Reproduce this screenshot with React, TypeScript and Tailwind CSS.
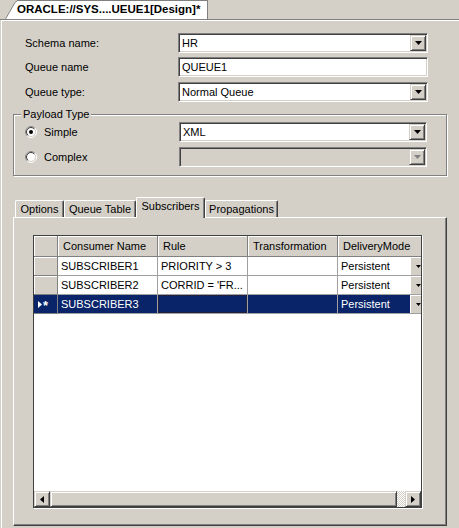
import React from "react";

const raised =
  "border border-t-[#d4d0c8] border-l-[#d4d0c8] border-b-[#404040] border-r-[#404040] shadow-[inset_1px_1px_0_#fff,inset_-1px_-1px_0_#808080] bg-[#d4d0c8]";
const sunken =
  "border border-t-[#808080] border-l-[#808080] border-b-white border-r-white shadow-[inset_1px_1px_0_#404040,inset_-1px_-1px_0_#d4d0c8]";

function DownArrow({ color = "#000" }: { color?: string }) {
  return (
    <svg width="7" height="4" viewBox="0 0 7 4">
      <polygon points="0,0 7,0 3.5,4" fill={color} />
    </svg>
  );
}

function Combo({ value, disabled, width = 250 }: { value?: string; disabled?: boolean; width?: number }) {
  return (
    <div
      className={`${sunken} h-[20px] p-[1px] flex items-center ${disabled ? "bg-[#d4d0c8]" : "bg-white"} ${
        width === 250 ? "w-[250px]" : "w-[248px]"
      }`}
    >
      <span className="pl-[2px] flex-1 leading-none">{value}</span>
      <div className={`${raised} w-[16px] h-[16px] flex items-center justify-center`}>
        <DownArrow color={disabled ? "#808080" : "#000"} />
      </div>
    </div>
  );
}

function Radio({ checked }: { checked?: boolean }) {
  return (
    <svg width="12" height="12" viewBox="0 0 12 12" className="shrink-0">
      <circle cx="6" cy="6" r="5.5" fill="none" stroke="#ffffff" />
      <path d="M 2.1 9.9 A 5.5 5.5 0 0 1 9.9 2.1" fill="none" stroke="#808080" />
      <circle cx="6" cy="6" r="4.5" fill="#fff" stroke="#d4d0c8" />
      <path d="M 2.8 9.2 A 4.5 4.5 0 0 1 9.2 2.8" fill="none" stroke="#404040" />
      {checked && <circle cx="6" cy="6" r="2" fill="#000" />}
    </svg>
  );
}

type Row = { name: string; rule: string; trans: string; mode: string; selected?: boolean };

const rows: Row[] = [
  { name: "SUBSCRIBER1", rule: "PRIORITY > 3", trans: "", mode: "Persistent" },
  { name: "SUBSCRIBER2", rule: "CORRID = 'FR...", trans: "", mode: "Persistent" },
  { name: "SUBSCRIBER3", rule: "", trans: "", mode: "Persistent", selected: true },
];

function Tab({ label, selected, w }: { label: string; selected?: boolean; w: string }) {
  return (
    <div
      className={`${w} shrink-0 flex items-center justify-center bg-[#d4d0c8] border-t border-l border-t-white border-l-white border-r border-r-[#404040] shadow-[inset_-1px_0_0_#808080] rounded-tl-[2px] rounded-tr-[2px] ${
        selected ? "h-[21px] -mb-px relative z-10 pb-[3px]" : "h-[17px]"
      }`}
    >
      {label}
    </div>
  );
}

export default function App() {
  return (
    <div className="w-[459px] h-[528px] bg-[#d4d0c8] overflow-hidden font-['Liberation_Sans',Arial,sans-serif] text-[11px] text-black flex flex-col">
      {/* document tab strip */}
      <div className="h-[20px] shrink-0 flex items-end border-b border-[#808080] pl-[5px]">
        <svg width="12" height="19" viewBox="0 0 12 19" className="shrink-0">
          <polygon points="0,19 10,2.5 12,1 12,19" fill="#fff" />
          <polyline points="0.5,19 10,2.5 12,1" fill="none" stroke="#808080" />
        </svg>
        <div className="h-[19px] bg-white border-t border-r border-[#808080] flex items-center pr-[7px] font-bold text-[11.5px] leading-none">
          ORACLE://SYS....UEUE1[Design]*
        </div>
      </div>

      <div className="flex-1 flex flex-col border-l border-t border-white ml-[1px]">
        {/* form fields */}
        <div className="pt-[12px] flex flex-col">
          <div className="flex items-center h-[20px]">
            <span className="w-[176px] pl-[23px]">Schema name:</span>
            <Combo value="HR" />
          </div>
          <div className="flex items-center h-[20px] mt-[4px]">
            <span className="w-[176px] pl-[23px]">Queue name</span>
            <div className={`${sunken} bg-white w-[250px] h-[20px] p-[1px] flex items-center`}>
              <span className="pl-[2px] leading-none">QUEUE1</span>
            </div>
          </div>
          <div className="flex items-center h-[20px] mt-[5px]">
            <span className="w-[176px] pl-[23px]">Queue type:</span>
            <Combo value="Normal Queue" />
          </div>
        </div>

        {/* payload group box */}
        <div className="relative mt-[12px] ml-[11px] w-[434px] h-[62px] border border-[#808080] shadow-[inset_1px_1px_0_#fff,1px_1px_0_#fff] pt-[7px] flex flex-col">
          <span className="absolute left-[7px] -top-[8px] px-[2px] bg-[#d4d0c8] leading-[14px]">Payload Type</span>
          <div className="flex items-center h-[20px] pl-[11px]">
            <Radio checked />
            <span className="ml-[7px] w-[135px]">Simple</span>
            <Combo value="XML" width={248} />
          </div>
          <div className="flex items-center h-[20px] pl-[11px] mt-[5px]">
            <Radio />
            <span className="ml-[7px] w-[135px]">Complex</span>
            <Combo disabled width={248} />
          </div>
        </div>

        {/* tabs */}
        <div className="mt-[21px] ml-[13px] h-[20px] flex items-end">
          <Tab label="Options" w="w-[49px]" />
          <Tab label="Queue Table" w="w-[72px]" />
          <Tab label="Subscribers" w="w-[69px]" selected />
          <Tab label="Propagations" w="w-[73px]" />
        </div>

        {/* tab panel */}
        <div className="ml-[11px] w-[434px] h-[309px] border border-t-white border-l-white border-b-[#404040] border-r-[#404040] shadow-[inset_-1px_-1px_0_#808080] pt-[17px] pl-[19px]">
          <div className="w-[389px] h-[273px] border border-[#404040] shadow-[1px_1px_0_#fff] bg-white flex flex-col overflow-hidden">
            {/* header */}
            <div className="flex h-[21px] shrink-0">
              <div className="w-[24px] shrink-0 bg-[#d4d0c8] border-r border-b border-[#808080] shadow-[inset_1px_1px_0_#fff]" />
              {[
                ["Consumer Name", "w-[100px]"],
                ["Rule", "w-[90px]"],
                ["Transformation", "w-[90px]"],
                ["DeliveryMode", "w-[90px]"],
              ].map(([t, w]) => (
                <div
                  key={t}
                  className={`${w} shrink-0 bg-[#d4d0c8] border-r border-b border-[#808080] shadow-[inset_1px_1px_0_#fff] flex items-center pl-[5px] whitespace-nowrap`}
                >
                  {t}
                </div>
              ))}
            </div>
            {/* rows */}
            {rows.map((r) => {
              const sel = r.selected;
              const cell = `shrink-0 border-r border-b border-[#a0a0a0] flex items-center pl-[3px] whitespace-nowrap overflow-hidden ${
                sel ? "bg-[#0a246a] text-white" : "bg-white"
              }`;
              return (
                <div key={r.name} className="flex h-[19px] shrink-0">
                  <div
                    className={`w-[24px] shrink-0 border-r border-b border-[#808080] flex items-center pl-[4px] gap-[1px] ${
                      sel ? "bg-[#0a246a]" : "bg-[#d4d0c8] shadow-[inset_1px_1px_0_#fff]"
                    }`}
                  >
                    {sel && (
                      <>
                        <svg width="4" height="7" viewBox="0 0 4 7">
                          <polygon points="0,0 4,3.5 0,7" fill="#fff" />
                        </svg>
                        <span className="text-white font-bold text-[13px] leading-none mt-[3px]">*</span>
                      </>
                    )}
                  </div>
                  <div className={`${cell} w-[100px]`}>{r.name}</div>
                  <div className={`${cell} w-[90px] ${sel ? "shadow-[inset_0_0_0_1px_#202040]" : ""}`}>{r.rule}</div>
                  <div className={`${cell} w-[90px]`}>{r.trans}</div>
                  <div className={`${cell} w-[90px] pr-0`}>
                    <span className="flex-1">{r.mode}</span>
                    <div className="w-[17px] h-full shrink-0 bg-[#d4d0c8] shadow-[inset_1px_1px_0_#fff] flex items-center justify-center">
                      <svg width="5" height="3" viewBox="0 0 5 3">
                        <polygon points="0,0 5,0 2.5,3" fill="#000" />
                      </svg>
                    </div>
                  </div>
                </div>
              );
            })}
            <div className="flex-1" />
            {/* horizontal scrollbar */}
            <div className="h-[16px] shrink-0 flex">
              <div className={`${raised} w-[16px] h-[16px] shrink-0 flex items-center justify-center`}>
                <svg width="4" height="7" viewBox="0 0 4 7">
                  <polygon points="4,0 0,3.5 4,7" fill="#000" />
                </svg>
              </div>
              <div className={`${raised} w-[347px] h-[16px] shrink-0`} />
              <div className="w-[8px] h-[16px] shrink-0 bg-[repeating-conic-gradient(#ffffff_0_25%,#d4d0c8_0_50%)] bg-[length:2px_2px]" />
              <div className={`${raised} w-[16px] h-[16px] shrink-0 flex items-center justify-center`}>
                <svg width="4" height="7" viewBox="0 0 4 7">
                  <polygon points="0,0 4,3.5 0,7" fill="#000" />
                </svg>
              </div>
            </div>
          </div>
        </div>
      </div>
    </div>
  );
}
